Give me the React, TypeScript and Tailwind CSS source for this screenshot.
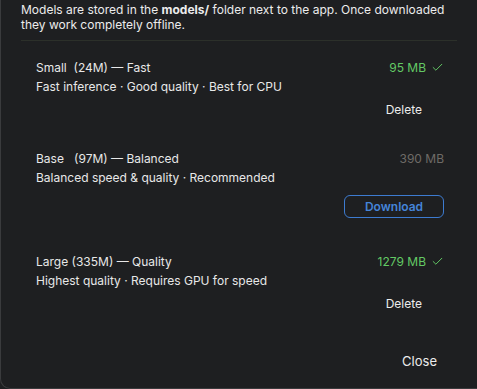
import { Check } from 'lucide-react';

type Model = {
  name: string;
  desc: string;
  mb: string;
  installed: boolean;
};

const models: Model[] = [
  { name: 'Small  (24M) — Fast', desc: 'Fast inference · Good quality · Best for CPU', mb: '95 MB', installed: true },
  { name: 'Base   (97M) — Balanced', desc: 'Balanced speed & quality · Recommended', mb: '390 MB', installed: false },
  { name: 'Large (335M) — Quality', desc: 'Highest quality · Requires GPU for speed', mb: '1279 MB', installed: true },
];

function ModelRow({ m, gap }: { m: Model; gap: string }) {
  return (
    <div className="pl-[35px] pr-[33px]">
      <div className="flex items-center justify-between leading-[19px]">
        <span className="whitespace-pre">{m.name}</span>
        <span className={m.installed ? 'flex items-center gap-[5px] text-[#63c965]' : 'text-[#6f6b67]'}>
          {m.mb}
          {m.installed && <Check className="w-[13px] h-[13px]" strokeWidth={1.8} />}
        </span>
      </div>
      <div className="leading-[19px]">{m.desc}</div>
      {m.installed ? (
        <div className={'flex justify-end ' + gap}>
          <button className="leading-[19px] pr-[22px] text-[#ececec]">Delete</button>
        </div>
      ) : (
        <div className={'flex justify-end ' + gap}>
          <button className="w-[100px] h-[23px] rounded-[6px] border border-[#3d7bd0] text-[#4584d8] font-semibold text-[12px]">
            Download
          </button>
        </div>
      )}
    </div>
  );
}

export default function App() {
  return (
    <div className="w-[477px] h-[389px] overflow-hidden bg-[#1e1f21]">
      <div
        className="h-[389px] border-l border-b border-[#3a3b3d] rounded-bl-[10px] bg-[#1e1f21] text-[#e8e8e8] text-[12px]"
        style={{ fontFamily: 'Inter, "Noto Sans", sans-serif' }}
      >
        <div className="px-[20px] pt-[2px] text-[12px] leading-[15px] text-[#ececec]">
          <div className="flex whitespace-pre">
            <span>Models are stored in the </span>
            <span className="font-bold">models/</span>
            <span> folder next to the app. Once downloaded</span>
          </div>
          <div>they work completely offline.</div>
        </div>
        <div className="mx-[20px] mt-[8px] h-px bg-[#2c302a]" />
        <div className="mt-[17px]">
          <ModelRow m={models[0]} gap="mt-[4px]" />
        </div>
        <div className="mt-[30px]">
          <ModelRow m={models[1]} gap="mt-[8px]" />
        </div>
        <div className="mt-[34px]">
          <ModelRow m={models[2]} gap="mt-[4px]" />
        </div>
        <div className="flex justify-end pr-[40px] mt-[39px]">
          <button className="text-[13px] text-[#ececec]">Close</button>
        </div>
      </div>
    </div>
  );
}
